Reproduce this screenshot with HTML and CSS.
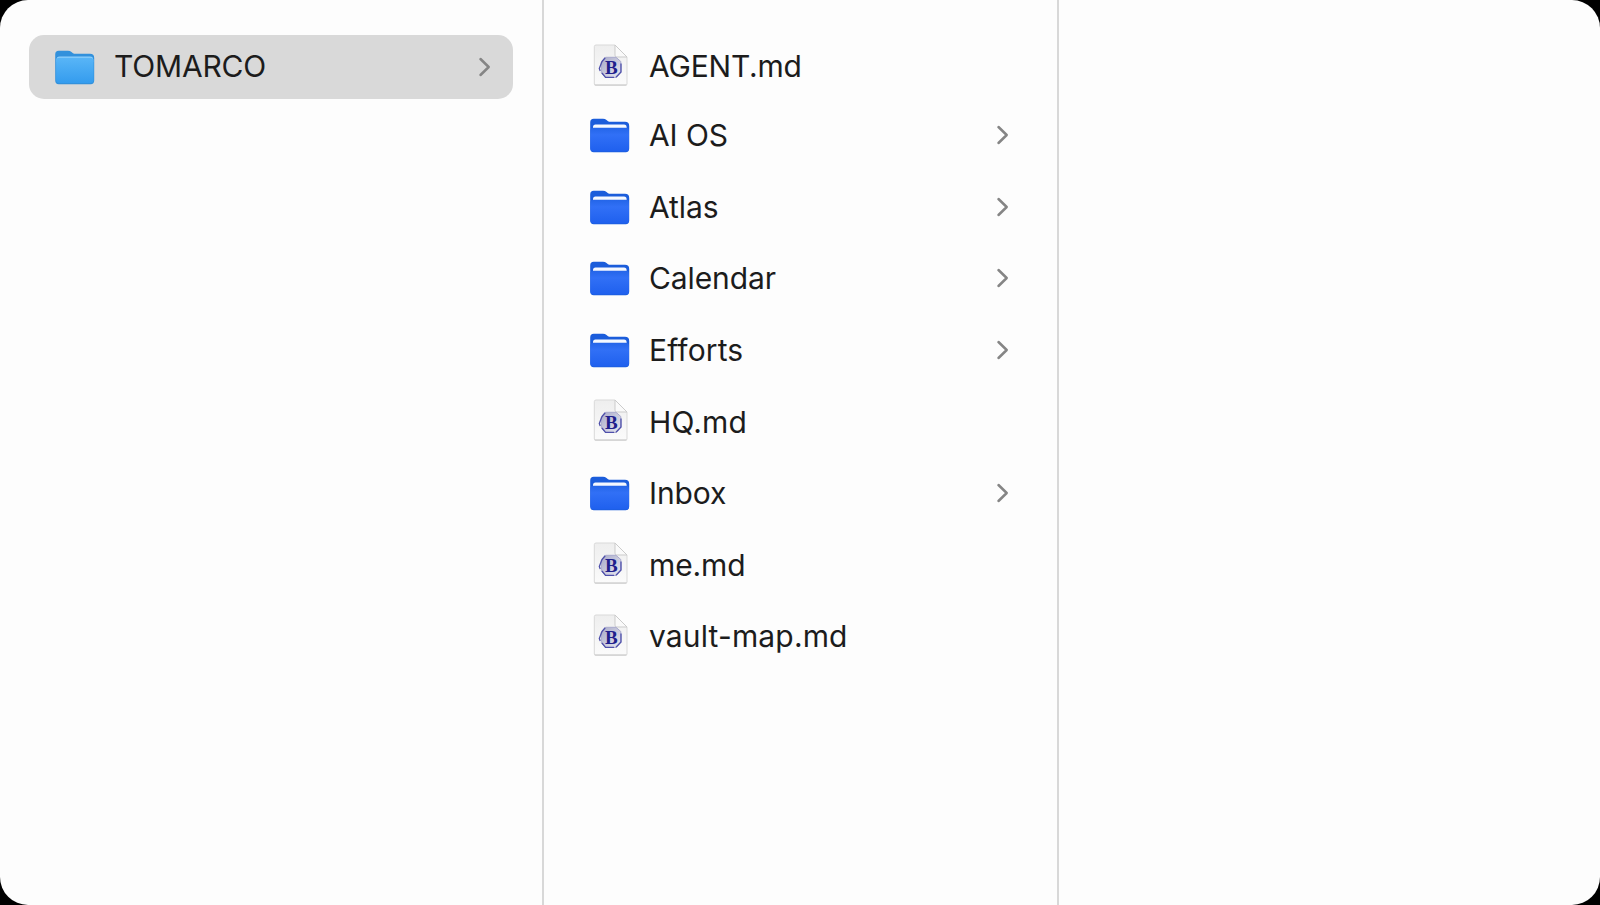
FILE: index.html
```html
<!DOCTYPE html>
<html lang="en">
<head>
    <meta charset="UTF-8">
    <meta name="viewport" content="width=device-width, initial-scale=1.0">
    <title>TOMARCO</title>
    <link rel="stylesheet" href="styles.css">
</head>
<body>
    <!-- Shared icons -->
    <svg class="defs" width="0" height="0" aria-hidden="true">
        <defs>
            <linearGradient id="blue" x1="0" y1="0" x2="0" y2="1">
                <stop offset="0" stop-color="#2465e8"/>
                <stop offset="0.3" stop-color="#3170f6"/>
                <stop offset="1" stop-color="#1f60ee"/>
            </linearGradient>
            <linearGradient id="sky" x1="0" y1="0" x2="0" y2="1">
                <stop offset="0" stop-color="#58b5f7"/>
                <stop offset="1" stop-color="#349cee"/>
            </linearGradient>
            <linearGradient id="paper" x1="0" y1="0" x2="0" y2="1">
                <stop offset="0" stop-color="#eeeeee"/>
                <stop offset="1" stop-color="#fbfbfb"/>
            </linearGradient>
            <linearGradient id="badge" x1="0" y1="0" x2="1" y2="1">
                <stop offset="0" stop-color="#a9abc9"/>
                <stop offset="1" stop-color="#e8e8f0"/>
            </linearGradient>
        </defs>
        <symbol id="folder" viewBox="0 0 40 35">
            <path d="M.2 4.5Q.2.8 3.7.8H13Q15 .8 16.5 2L18 3.2Q19 3.8 20.5 3.8H35Q39.2 3.8 39.2 8V30.5Q39.2 34.2 35.7 34.2H3.7Q.2 34.2 .2 30.5Z" fill="#1b5ddb"/>
            <path d="M3 11.5V9Q3 6.4 5.5 6.4H34Q36.6 6.4 36.6 9V11.5Z" fill="#f4f8ff"/>
            <path d="M.4 12.7Q.4 9.7 3.4 9.7H36Q39 9.7 39 12.7V30Q39 33.5 35.5 33.5H3.9Q.4 33.5 .4 30Z" fill="url(#blue)"/>
        </symbol>
        <symbol id="folder-open" viewBox="0 0 40 35">
            <path d="M.2 4.5Q.2.8 3.7.8H13Q15 .8 16.5 2L18 3.2Q19 3.8 20.5 3.8H35Q39.2 3.8 39.2 8V30.5Q39.2 34.2 35.7 34.2H3.7Q.2 34.2 .2 30.5Z" fill="#3291dc"/>
            <path d="M1.5 9.5Q1.5 6.6 4.5 6.6H35.2Q38.2 6.6 38.2 9.5V12H1.5Z" fill="#8fd0fb"/>
            <path d="M1.1 10.9Q1.1 7.8 4.1 7.8H35.5Q38.6 7.8 38.6 10.9V30Q38.6 33 35.5 33H4.1Q1.1 33 1.1 30Z" fill="url(#sky)"/>
        </symbol>
        <symbol id="doc" viewBox="0 0 40 43">
            <path d="M6 1H25L37 13V40Q37 41.2 35.2 41.2H6Q4.3 41.2 4.3 40V2.7Q4.3 1 6 1Z" fill="url(#paper)" stroke="#d9d9d9" stroke-width="1"/>
            <path d="M4.8 41H36.5" stroke="#c8c8c8" stroke-width="1"/>
            <path d="M25 1V11.2Q25 13 26.8 13H37Z" fill="#fafafa" stroke="#cbcbcb" stroke-width="1"/>
            <path d="M15.5 13.3H26L30.8 17.5V28.5L26 33.5H15.5L11.3 29V18Z" fill="url(#badge)" stroke="#a9aacd" stroke-width="1"/>
            <path d="M12 17.5L9.3 24.5L10.2 27M31 19.5V28L26 33.3M12 29L15.5 33.3H24M15.2 13.8L12 17.5" fill="none" stroke="#4f50ab" stroke-width="1.3"/>
        </symbol>
        <symbol id="chevron" viewBox="0 0 14 22">
            <path d="M2.5 3L10.7 11L2.5 19" fill="none" stroke="currentColor" stroke-width="2.5" stroke-linecap="round" stroke-linejoin="round"/>
        </symbol>
    </svg>

    <main class="browser">
        <section class="column column-root">
            <div class="row selected">
                <svg class="icon"><use href="#folder-open"/></svg>
                <span class="name upper">TOMARCO</span>
                <svg class="chevron"><use href="#chevron"/></svg>
            </div>
        </section>

        <section class="column column-files">
            <div class="row first">
                <svg class="icon doc"><use href="#doc"/><text x="21.4" y="29.8" class="badge-letter">B</text></svg>
                <span class="name upper">AGENT.md</span>
            </div>
            <div class="row">
                <svg class="icon"><use href="#folder"/></svg>
                <span class="name">AI OS</span>
                <svg class="chevron"><use href="#chevron"/></svg>
            </div>
            <div class="row">
                <svg class="icon"><use href="#folder"/></svg>
                <span class="name">Atlas</span>
                <svg class="chevron"><use href="#chevron"/></svg>
            </div>
            <div class="row">
                <svg class="icon"><use href="#folder"/></svg>
                <span class="name">Calendar</span>
                <svg class="chevron"><use href="#chevron"/></svg>
            </div>
            <div class="row">
                <svg class="icon"><use href="#folder"/></svg>
                <span class="name loose">Efforts</span>
                <svg class="chevron"><use href="#chevron"/></svg>
            </div>
            <div class="row">
                <svg class="icon doc"><use href="#doc"/><text x="21.4" y="29.8" class="badge-letter">B</text></svg>
                <span class="name loose">HQ.md</span>
            </div>
            <div class="row">
                <svg class="icon"><use href="#folder"/></svg>
                <span class="name">Inbox</span>
                <svg class="chevron"><use href="#chevron"/></svg>
            </div>
            <div class="row">
                <svg class="icon doc"><use href="#doc"/><text x="21.4" y="29.8" class="badge-letter">B</text></svg>
                <span class="name">me.md</span>
            </div>
            <div class="row">
                <svg class="icon doc"><use href="#doc"/><text x="21.4" y="29.8" class="badge-letter">B</text></svg>
                <span class="name loose">vault-map.md</span>
            </div>
        </section>

        <section class="column column-empty"></section>
    </main>
</body>
</html>
```

FILE: styles.css
```css
* {
    box-sizing: border-box;
}

body {
    margin: 0;
    background-color: #000;
    font-family: Inter, "Liberation Sans", sans-serif;
    font-size: 30px;
    color: #1c1c1c;
}

.defs {
    display: block;
}

.browser {
    display: flex;
    height: 905px;
    background-color: #fdfdfd;
    border-radius: 28px;
    overflow: hidden;
}

.column {
    padding-top: 35px;
}

.column-root {
    width: 544px;
    padding-left: 29px;
    padding-right: 29px;
    border-right: 2px solid #d8d8d8;
}

.column-files {
    width: 515px;
    padding-left: 46px;
    padding-right: 47px;
    border-right: 2px solid #d8d8d8;
}

.column-empty {
    flex: 1;
}

.row {
    display: flex;
    align-items: center;
    height: 71.6px;
}

.row.first {
    height: 65px;
}

.row.first .name {
    margin-bottom: 4px;
}

.row.first .doc {
    margin-bottom: 4px;
}

.selected {
    height: 64px;
    padding-left: 26px;
    padding-right: 21px;
    border-radius: 15px;
    background-color: #d9d9d9;
}

.selected .name {
    margin-bottom: 3px;
}

.icon {
    width: 40px;
    height: 35px;
    margin-right: 19px;
}

.icon.doc {
    height: 43px;
    margin-bottom: 3px;
}

.name {
    flex: 1;
    margin-bottom: 1px;
    line-height: 36px;
    letter-spacing: -0.1px;
}

.name.upper {
    letter-spacing: -0.2px;
}

.name.loose {
    letter-spacing: 0.15px;
    font-variant-ligatures: none;
}

.chevron {
    width: 14px;
    height: 22px;
    margin-bottom: 1px;
    color: #858585;
}

.badge-letter {
    font-family: "Liberation Serif", serif;
    font-size: 19px;
    font-weight: bold;
    fill: #20208c;
    text-anchor: middle;
}
```
